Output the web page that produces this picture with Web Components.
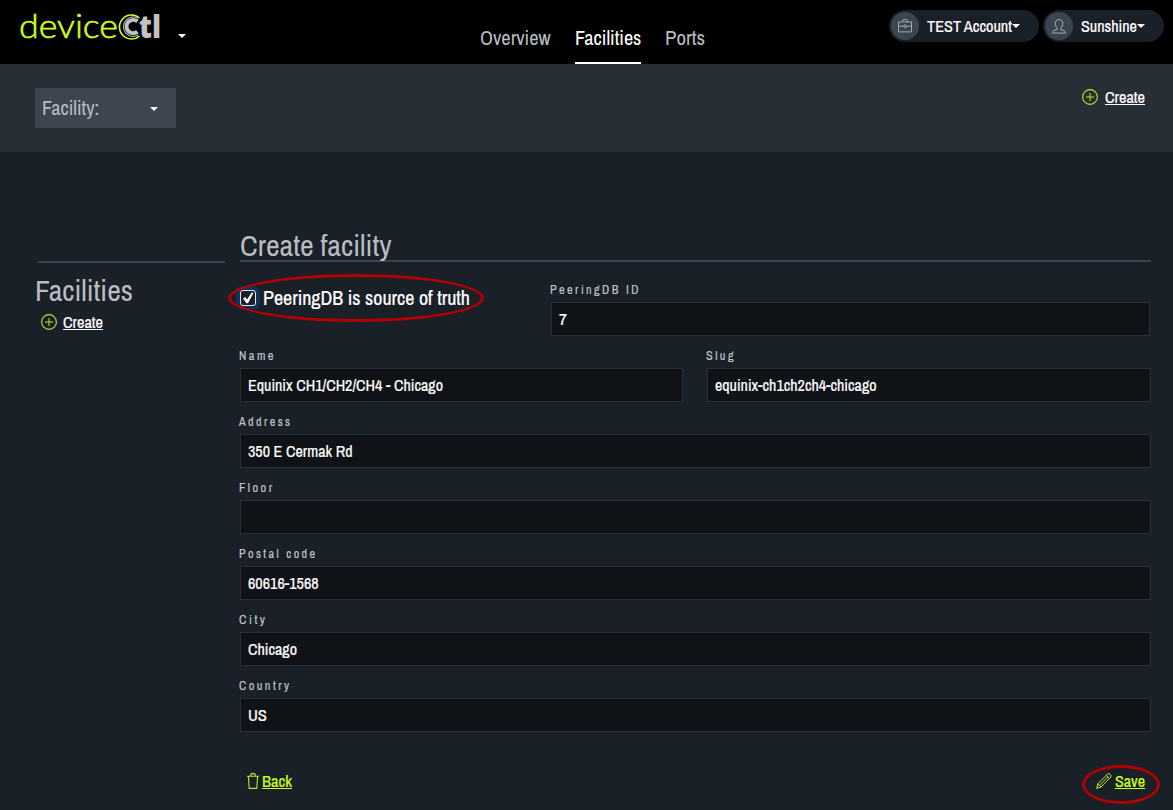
<!DOCTYPE html>
<html lang="en">
<head>
<meta charset="utf-8">
<title>deviceCtl</title>
<style>
html,body{margin:0;background:#1a2027}
body{font-family:"Archivo Narrow","Liberation Sans Narrow","Liberation Sans",sans-serif;width:1173px;height:810px;overflow:hidden}
</style>
</head>
<body>
<device-app></device-app>
<script>
const define=(name,html,setup)=>customElements.define(name,class extends HTMLElement{
  connectedCallback(){
    if(this.shadowRoot)return;
    const t=document.createElement('template');
    t.innerHTML=html;
    this.attachShadow({mode:'open'}).append(t.content.cloneNode(true));
    if(setup)setup(this,this.shadowRoot);
  }
});

/* Condensed text: sets its content to a given width */
define('fit-text',`<style>
:host{display:inline-block;white-space:nowrap;flex:none;text-align:left}
span{display:inline-block;transform-origin:0 50%;text-decoration:inherit;text-underline-offset:1px}
:host([u]) span{text-decoration:underline;text-decoration-thickness:1px}
</style><span><slot></slot></span>`,(el,root)=>{
  const w=+el.getAttribute('w'),s=root.querySelector('span');
  el.style.width=w+'px';
  const n=s.getBoundingClientRect().width;
  if(n)s.style.transform='scaleX('+w/n+')';
});

define('ui-caret',`<style>:host{display:block;flex:none;width:0;height:0;border:4.5px solid transparent;border-top-color:#fff;border-bottom:0}</style>`);

define('ui-icon',`<style>:host{display:block;flex:none}svg{display:block;fill:none;stroke:currentColor}</style>`,(el,root)=>{
  const icons={
    plus:'<svg width="16" height="16" viewBox="0 0 16 16"><circle cx="8" cy="8" r="7.4" stroke-width="1.1"/><path d="M8 4v8M4 8h8"/></svg>',
    bag:'<svg width="14" height="14" viewBox="0 0 14 14" stroke-width=".9"><path d="M.5 2.9h13v10H.5zM4.6 2.7V1.5q0-.9.9-.9h3q.9 0 .9.9v1.2M.5 7.2h5.2M8.3 7.2h5.2"/><circle cx="7" cy="7.2" r="1.3"/></svg>',
    user:'<svg width="14" height="15" viewBox="0 0 14 15" stroke-width=".95"><path d="M5.3 9.2C4 8 3.3 6.4 3.3 4.5 3.3 2.1 4.7.6 7 .6s3.7 1.5 3.7 3.9c0 1.9-.7 3.5-2 4.7v1.2l3.6 1.3q1.2.5 1.2 2.4H.5q0-1.9 1.2-2.4l3.6-1.3z"/></svg>',
    trash:'<svg width="12" height="16" viewBox="0 0 12 16"><path d="M0 3.2h12M3.8 3V1.7Q3.8.6 4.9.6h2.2q1.1 0 1.1 1.1V3M1.4 3.4l.8 12h7.6l.8-12" stroke-width="1.1"/></svg>',
    pencil:'<svg width="16" height="16" viewBox="0 0 16 16"><path d="M.7 15.3l1.1-4.5L11.6 1q1.2-1.1 2.6.3 1.6 1.5.5 2.8L5 14z M1.8 10.8L5 14M10.3 2.3l3.2 3.2M3.4 12.4L12 3.8M.8 15.2l1.3-1.3" stroke-width="1"/></svg>'
  };
  root.innerHTML+=icons[el.getAttribute('name')];
});

define('ui-logo',`<style>
:host{display:flex;align-items:flex-start;height:50px;width:142px;font-family:Lato,sans-serif}
fit-text{font-size:33.5px;line-height:50px;color:#cdff20}
.d{font-weight:300;-webkit-text-stroke:.6px #cdff20}
svg{display:block;margin-top:13px;flex:none;fill:none}
.t{font-family:"Open Sans",sans-serif;font-size:31.5px;font-weight:800;color:#c2c2c5;margin:1px 0 0 -2px}
</style><fit-text class="d" w="99">device</fit-text>
<svg width="23" height="28" viewBox="0 0 23 28">
<path d="M21.4 5A12 12 0 1 0 21.4 23" stroke="#cdff20" stroke-width="1.6"/>
<path d="M20 5.3A9.7 9.7 0 1 0 20 22.1" stroke="#aaaaad" stroke-width="1.2"/>
<path d="M19.4 8.4A6.6 6.6 0 1 0 19.4 18.6" stroke="#c2c2c5" stroke-width="4"/>
</svg><fit-text class="t" w="22">tl</fit-text>`);

define('nav-tab',`<style>
:host{display:flex;box-sizing:border-box;height:64px;padding-top:26px;border-bottom:2px solid transparent;font-size:20px;line-height:24px;color:#b9bcc0}
:host([active]){color:#fff;border-color:#fff}
</style><slot></slot>`);

define('user-chip',`<style>
:host{display:flex;align-items:center;box-sizing:border-box;height:32px;border-radius:16px;background:#1a2027;padding:0 0 0 2px;color:#fff;font-size:16px;line-height:32px;-webkit-text-stroke:.2px #fff}
.i{width:28px;height:28px;border-radius:50%;background:#3b454f;display:flex;align-items:center;justify-content:center;color:#aeb3b8;margin-right:8px}
ui-caret{margin:0 0 1px 0}
</style><div class="i"></div><slot></slot><ui-caret></ui-caret>`,(el,root)=>{
  root.querySelector('.i').innerHTML='<ui-icon name="'+el.getAttribute('icon')+'"></ui-icon>';
});

define('icon-link',`<style>
:host{display:flex;align-items:center;height:22px;font-size:16px;line-height:22px;color:#fff;-webkit-text-stroke:.2px currentColor}
:host([green]){color:#cdff20}
::slotted(ui-icon){color:#b8e62a}
</style><slot name="icon"></slot><slot></slot>`);

define('form-field',`<style>
:host{display:block;height:66px}
.l{font-size:12px;line-height:18px;height:18px;letter-spacing:2.4px;color:#c0c3c7;margin-bottom:3px;-webkit-text-stroke:.15px #c0c3c7}
.l fit-text{margin-left:-.6px}
.v{box-sizing:border-box;height:34px;border:1px solid #282f37;background:#0f1216;padding-left:7.4px;font-size:16px;line-height:33px;color:#fff;-webkit-text-stroke:.2px #fff}
fit-text{display:block}
</style><div class="l"></div><div class="v"></div>`,(el,root)=>{
  const a=n=>el.getAttribute(n);
  root.querySelector('.l').innerHTML='<fit-text w="'+a('lw')+'">'+a('label')+'</fit-text>';
  if(a('value'))root.querySelector('.v').innerHTML='<fit-text w="'+a('vw')+'">'+a('value')+'</fit-text>';
});

define('check-field',`<style>
:host{display:flex;align-items:center;height:34px;font-size:20px;line-height:34px;color:#fff;-webkit-text-stroke:.2px #fff}
.b{box-sizing:border-box;width:16px;height:16px;border:1px solid #e8e8e8;border-radius:3px;background:#1a2027;box-shadow:0 0 0 4px #15305a;margin-right:7.4px}
svg{display:block}
</style><div class="b"><svg width="14" height="14" viewBox="0 0 14 14"><path d="M2 7.6L4.3 5.9 6.1 8.6 10.7 1.5 12.4 2.1 7 12.2 5.4 12.2z" fill="#fff"/></svg></div><slot></slot>`);

define('red-ring',`<style>:host{position:absolute;box-sizing:border-box;border:3px solid #b00000;border-radius:50%;pointer-events:none}</style>`);

define('app-header',`<style>
:host{display:grid;grid-template-columns:480px 1fr auto;height:64px;background:#000}
.brand{display:flex;padding-left:19px}
.brand ui-caret{margin:34px 0 0 17px}
nav{display:flex;gap:24px}
.chips{display:flex;gap:4px;padding:10px 9px 0 0}
</style>
<div class="brand"><ui-logo></ui-logo><ui-caret></ui-caret></div>
<nav><nav-tab><fit-text w="70.6">Overview</fit-text></nav-tab><nav-tab active><fit-text w="66.4">Facilities</fit-text></nav-tab><nav-tab><fit-text w="40">Ports</fit-text></nav-tab></nav>
<div class="chips"><user-chip icon="bag" style="width:150px"><fit-text w="85">TEST Account</fit-text></user-chip><user-chip icon="user" style="width:121px"><fit-text w="56">Sunshine</fit-text></user-chip></div>`);

define('tool-bar',`<style>
:host{display:flex;justify-content:space-between;box-sizing:border-box;height:88px;background:#282e36;padding:24px 28px 0 35px}
.s{display:flex;align-items:center;justify-content:space-between;box-sizing:border-box;width:141px;height:40px;background:#3d4650;padding:0 18px 0 7.4px;font-size:20px;line-height:40px;color:#b9bcc0}
.s ui-caret{margin-top:2px}
icon-link{margin-top:-2px}
ui-icon{margin-right:7px}
</style><div class="s"><fit-text w="57">Facility:</fit-text><ui-caret></ui-caret></div>
<icon-link><ui-icon slot="icon" name="plus"></ui-icon><fit-text u w="40">Create</fit-text></icon-link>`);

define('side-nav',`<style>
:host{display:block;padding:109px 0 0 35px}
hr{border:0;height:2px;margin:0 15px 0 3px;background:#3b454f}
h2{margin:7px 0 1px;font-size:30px;font-weight:400;line-height:40px;height:40px;color:#b9bcc0}
h2 fit-text{margin-left:-.5px}
icon-link{margin:0 0 0 6px}
ui-icon{margin-right:6px}
</style><hr><h2><fit-text w="98">Facilities</fit-text></h2>
<icon-link><ui-icon slot="icon" name="plus"></ui-icon><fit-text u w="40">Create</fit-text></icon-link>`);

define('facility-form',`<style>
:host{display:block;padding:74px 22px 0 0}
h1{box-sizing:border-box;margin:0 0 19px;height:36px;border-bottom:2px solid #3b454f;font-size:30px;font-weight:400;line-height:38px;color:#b9bcc0}
h1 fit-text{margin-left:-.4px}
.a{display:grid;grid-template-columns:311px 1fr}
.a form-field{margin-right:1px}
.b{display:grid;grid-template-columns:443px 1fr;gap:24px}
.f{display:flex;justify-content:space-between;padding:27px 6px 0 7px}
ui-icon{margin-right:3px}
</style>
<h1><fit-text w="151.5">Create facility</fit-text></h1>
<div class="a"><check-field><fit-text w="207">PeeringDB is source of truth</fit-text></check-field><form-field label="PeeringDB ID" lw="91" value="7" vw="8"></form-field></div>
<div class="b"><form-field label="Name" lw="37" value="Equinix CH1/CH2/CH4 - Chicago" vw="195"></form-field><form-field label="Slug" lw="30" value="equinix-ch1ch2ch4-chicago" vw="161.5"></form-field></div>
<form-field label="Address" lw="53.5" value="350 E Cermak Rd" vw="104.6"></form-field>
<form-field label="Floor" lw="35.5"></form-field>
<form-field label="Postal code" lw="78.5" value="60616-1568" vw="70.6"></form-field>
<form-field label="City" lw="28.5" value="Chicago" vw="49"></form-field>
<form-field label="Country" lw="52.5" value="US" vw="19"></form-field>
<div class="f"><icon-link green><ui-icon slot="icon" name="trash"></ui-icon><fit-text u w="30">Back</fit-text></icon-link><icon-link green><ui-icon slot="icon" name="pencil"></ui-icon><fit-text u w="30">Save</fit-text></icon-link></div>`);

define('device-app',`<style>
:host{display:block;position:relative;width:1173px;height:810px;overflow:hidden;background:#1a2027}
main{display:grid;grid-template-columns:240px 1fr}
</style>
<app-header></app-header><tool-bar></tool-bar>
<main><side-nav></side-nav><facility-form></facility-form></main>
<red-ring style="left:228px;top:274px;width:256px;height:48px"></red-ring>
<red-ring style="left:1082px;top:765px;width:78px;height:39px"></red-ring>`);
</script>
</body>
</html>
